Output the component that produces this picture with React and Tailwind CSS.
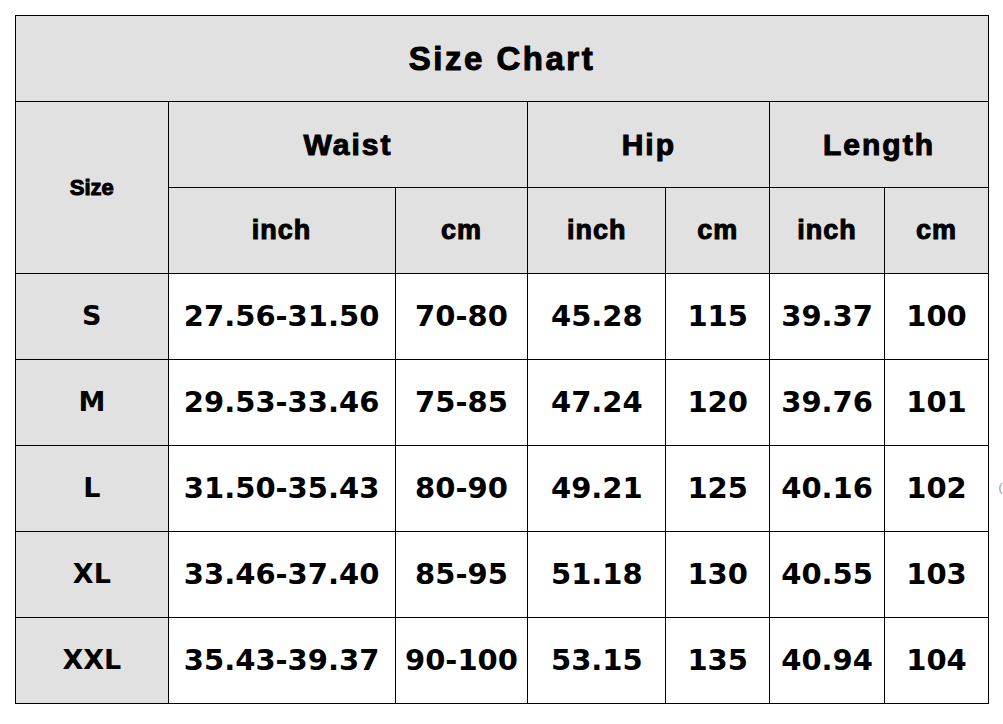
const head = "font-['Liberation_Sans',Arial,sans-serif] font-bold text-black [-webkit-text-stroke:1px_black]"
const body = "font-['DejaVu_Sans','Liberation_Sans',sans-serif] font-bold text-black"

const rows = [
  ['S', '27.56-31.50', '70-80', '45.28', '115', '39.37', '100'],
  ['M', '29.53-33.46', '75-85', '47.24', '120', '39.76', '101'],
  ['L', '31.50-35.43', '80-90', '49.21', '125', '40.16', '102'],
  ['XL', '33.46-37.40', '85-95', '51.18', '130', '40.55', '103'],
  ['XXL', '35.43-39.37', '90-100', '53.15', '135', '40.94', '104'],
]

const widths = [153, 227, 133, 138, 104, 115, 104]

export default function App() {
  return (
    <div className="flex items-start bg-white w-[1003px] h-[724px] pl-[15px] pt-[15px]">
      <table className="border-collapse table-fixed border border-black">
        <colgroup>
          {widths.map((w, i) => (
            <col key={i} style={{ width: w }} />
          ))}
        </colgroup>
        <tbody>
          {/* title */}
          <tr className="h-[86px] bg-[#e1e1e1]">
            <td colSpan={7} className={`${head} border border-black text-center text-[33px] tracking-[2.5px]`}>
              Size Chart
            </td>
          </tr>
          <tr className="h-[86px] bg-[#e1e1e1]">
            <td rowSpan={2} className={`${head} border border-black text-center text-[22px] [-webkit-text-stroke:0.6px_black]`}>
              Size
            </td>
            <td colSpan={2} className={`${head} border border-black text-center text-[30px] tracking-[2px]`}>
              Waist
            </td>
            <td colSpan={2} className={`${head} border border-black text-center text-[30px] tracking-[2px]`}>
              Hip
            </td>
            <td colSpan={2} className={`${head} border border-black text-center text-[30px] tracking-[2px]`}>
              Length
            </td>
          </tr>
          <tr className="h-[86px] bg-[#e1e1e1]">
            {['inch', 'cm', 'inch', 'cm', 'inch', 'cm'].map((t, i) => (
              <td key={i} className={`${head} border border-black text-center text-[27px] tracking-[1px]`}>
                {t}
              </td>
            ))}
          </tr>
          {/* data rows */}
          {rows.map(r => (
            <tr key={r[0]} className="h-[86px]">
              <td className={`${body} border border-black bg-[#e1e1e1] text-center text-[27px]`}>{r[0]}</td>
              {r.slice(1).map((v, i) => (
                <td key={i} className={`${body} border border-black bg-white text-center text-[29px] whitespace-nowrap px-0`}>
                  {v}
                </td>
              ))}
            </tr>
          ))}
        </tbody>
      </table>
      <span className="ml-[9px] mt-[464px] text-[13px] text-gray-400 font-['DejaVu_Sans',sans-serif]">(</span>
    </div>
  )
}
